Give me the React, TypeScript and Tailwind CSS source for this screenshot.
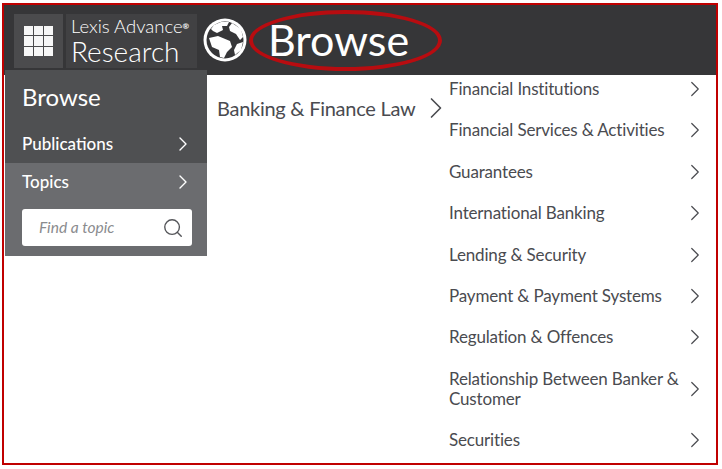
import { ChevronRight, Search } from "lucide-react";

const topics = [
  "Financial Institutions",
  "Financial Services & Activities",
  "Guarantees",
  "International Banking",
  "Lending & Security",
  "Payment & Payment Systems",
  "Regulation & Offences",
  "Relationship Between Banker & Customer",
  "Securities",
];

const Globe = () => (
  <svg width="46" height="46" viewBox="0 0 46 46" className="shrink-0">
    <circle cx="23" cy="23" r="21.5" fill="#fff" />
    <circle cx="23" cy="23" r="18.5" fill="#363638" />
    <path d="M12 8 L19 5 L27 5 L25 9 L20 9 L21 13 L15 16 L11 14 L9 12 Z" fill="#fff" />
    <path d="M30 6 L39 12 L41 20 L38 23 L34 17 L28 14 L27 10 Z" fill="#fff" />
    <path d="M7 21 L16 19 L28 24 L30 30 L25 35 L22 41 L18 40 L17 33 L10 30 Z" fill="#fff" />
    <path d="M35 27 L41 25 L39 33 L33 38 L32 33 Z" fill="#fff" />
  </svg>
);

const GridIcon = () => (
  <div className="grid h-[30px] w-[30px] grid-cols-3 grid-rows-3 gap-px">
    {Array.from({ length: 9 }).map((_, i) => (
      <div key={i} className="bg-[#f7f7f7]" />
    ))}
  </div>
);

const Header = () => (
  <header className="flex h-[70px] shrink-0 items-start bg-[#363638] pl-[10px] pt-[9px]">
    <div className="flex h-[54px] w-[49px] items-center justify-center bg-[#4b4b4d]">
      <GridIcon />
    </div>
    <div className="ml-[3px] h-[54px] w-[131px] bg-[#414143] pl-[5px] pt-[3px] font-light text-white">
      <div className="h-[20px] whitespace-nowrap text-[18.5px] leading-[18px]">
        Lexis Advance
        <sup className="text-[8px] font-bold leading-none">®</sup>
      </div>
      <div className="text-[28px] leading-[29px]">Research</div>
    </div>
    <div className="ml-[5px] mt-[3px]">
      <Globe />
    </div>
    <div className="ml-[20px] text-[43px] leading-[52px] text-white">Browse</div>
  </header>
);

const SideMenu = () => (
  <aside className="z-10 -mt-[5px] ml-px h-[186px] w-[202px] shrink-0 text-white">
    <div className="h-[93px] bg-[#4f5052] pl-[17px] pr-[12px]">
      <div className="pt-[12px] text-[24px] leading-[30px]">Browse</div>
      <div className="mt-[20px] flex items-center justify-between text-[17px] font-medium leading-[22px]">
        Publications
        <ChevronRight size={24} strokeWidth={1.4} />
      </div>
    </div>
    <div className="h-[93px] bg-[#6b6c6f] pl-[17px] pr-[15px]">
      <div className="flex items-center justify-between pt-[7px] text-[17px] font-medium leading-[22px]">
        Topics
        <ChevronRight size={24} strokeWidth={1.4} className="-mr-[3px]" />
      </div>
      <div className="mt-[15px] flex h-[37px] items-center justify-between rounded-[3px] bg-white pl-[17px] pr-[8px]">
        <span className="text-[15.5px] italic text-[#8a8b8e]">Find a topic</span>
        <Search size={22} strokeWidth={1.5} className="text-[#55565a]" />
      </div>
    </div>
  </aside>
);

export default function App() {
  return (
    <div className="relative h-[469px] w-[722px] overflow-hidden bg-white font-['Lato',sans-serif]">
      <div className="ml-[2px] mt-[3px] flex h-[462px] w-[716px] flex-col border-2 border-[#c00000]">
        <Header />
        <div className="flex min-h-0 flex-1 text-[#4a4b50]">
          <SideMenu />
          <div className="flex h-[40px] w-[242px] shrink-0 items-start pl-[10px] pt-[21px]">
            <span className="whitespace-nowrap text-[20px] leading-[24px] tracking-[-0.27px]">Banking &amp; Finance Law</span>
            <ChevronRight size={36} strokeWidth={1.1} className="-mt-[6px] ml-[3px] shrink-0" />
          </div>
          <ul className="flex w-[264px] flex-col gap-[21.4px] pt-[4px]">
            {topics.map((t) => (
              <li key={t} className="flex items-center justify-between pr-[5px] text-[17px] leading-[20px] tracking-[-0.17px]">
                <span className="w-[236px]">{t}</span>
                <ChevronRight size={26} strokeWidth={1.1} className="-my-[3px] shrink-0" />
              </li>
            ))}
          </ul>
        </div>
      </div>
      {/* hand drawn annotation rings */}
      <div className="absolute left-[249px] top-[10px] h-[61px] w-[193px] rounded-[50%] border-4 border-[#b80c10]" />
      <div className="absolute left-[6px] top-[155px] h-[59px] w-[90px] rounded-[50%] border-4 border-[#b80c10]" />
    </div>
  );
}
